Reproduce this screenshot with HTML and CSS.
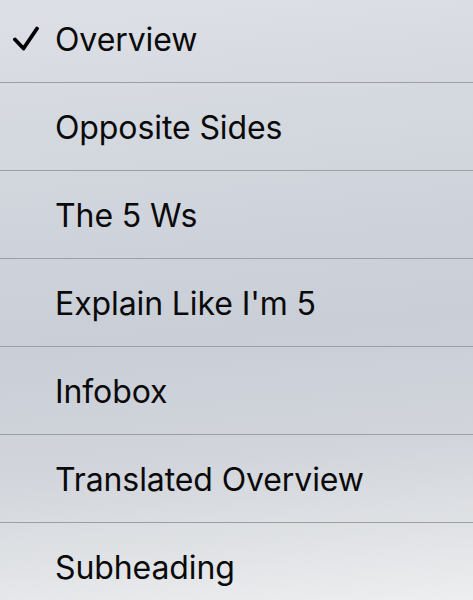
FILE: index.html
```html
<!DOCTYPE html>
<html>
<head>
<meta charset="utf-8">
<link rel="stylesheet" href="styles.css">
</head>
<body>
<ul class="menu">
  <li class="item checked">
    <svg class="check" width="26" height="26" viewBox="0 0 26 26"><path d="M2 13.5 L10.5 22.5 L24 2.5" fill="none" stroke="#000" stroke-width="3.8" stroke-linecap="round" stroke-linejoin="round"/></svg>
    <span class="label">Overview</span>
  </li>
  <li class="item"><span class="label">Opposite Sides</span></li>
  <li class="item"><span class="label">The 5 Ws</span></li>
  <li class="item"><span class="label">Explain Like I'm 5</span></li>
  <li class="item"><span class="label">Infobox</span></li>
  <li class="item"><span class="label">Translated Overview</span></li>
  <li class="item"><span class="label">Subheading</span></li>
</ul>
</body>
</html>
```
FILE: styles.css
```css
html, body {
  margin: 0;
  padding: 0;
  height: 100%;
  overflow: hidden;
}
body {
  background: linear-gradient(175deg, #dde0e6 0%, #d3d7de 25%, #c9ced7 55%, #d2d5db 75%, #eceeef 100%);
  font-family: Inter, "Liberation Sans", Arial, sans-serif;
  color: #0a0a0a;
}
.menu {
  list-style: none;
  margin: -5px 0 0 0;
  padding: 0;
}
.item {
  position: relative;
  height: 87px;
  box-sizing: content-box;
  border-bottom: 1px solid #9c9fa4;
  display: flex;
  align-items: center;
  padding-left: 55px;
}
.label {
  font-size: 32px;
  letter-spacing: -0.1px;
  padding-top: 2px;
}
.check {
  position: absolute;
  left: 13px;
  top: 31px;
}
```
